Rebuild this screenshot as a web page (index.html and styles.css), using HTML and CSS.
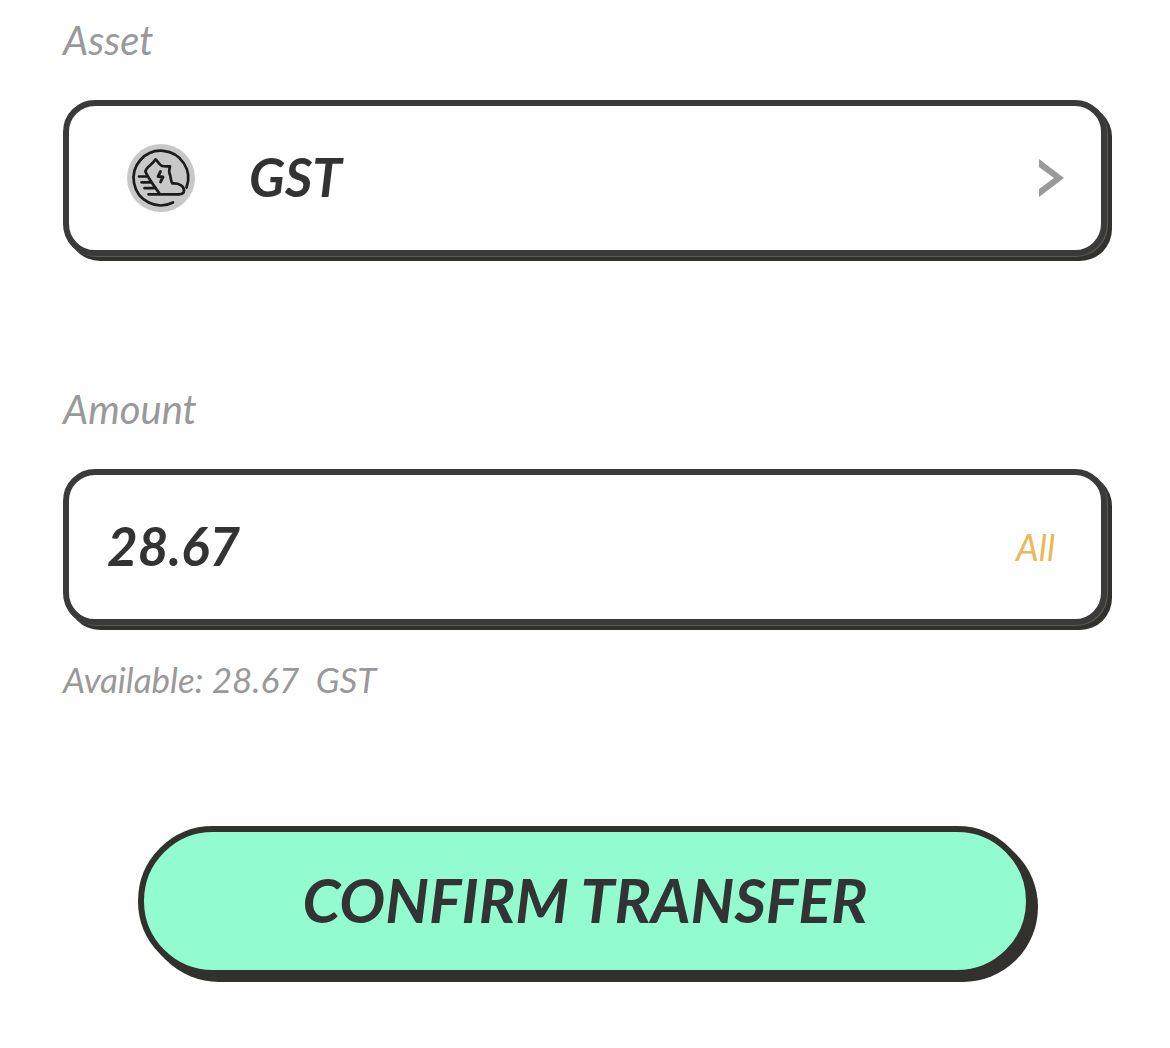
FILE: index.html
```html
<!DOCTYPE html>
<html lang="en">
<head>
    <meta charset="UTF-8">
    <meta name="viewport" content="width=device-width, initial-scale=1.0">
    <title>Transfer</title>
    <link rel="stylesheet" href="styles.css">
</head>
<body>
    <form class="transfer-form">
        <div class="field">
            <label class="field-label" for="asset">Asset</label>
            <button class="field-box asset-btn" id="asset" type="button">
                <svg class="asset-icon" viewBox="0 0 68 68" aria-hidden="true">
                    <circle cx="34" cy="34" r="34" fill="#c8c8c8"/>
                    <g fill="none" stroke="#1c1c1c" stroke-width="2.7" stroke-linecap="round" stroke-linejoin="round">
                        <path d="M59.5 43.5A27.3 27.3 0 1 0 46 58.5"/>
                        <path d="M18.500 27.500C19 23 25 21 28.500 15.500C31 17 31.500 20.500 34.500 21.700C37 22.700 40 22.500 43 22.300C42.500 25 41.500 27 42.500 29.500C44.500 33 43 37 45.500 39.500C52 39 57 42 57 46.500C57 49 55 50.300 52 50.300H21.500"/>
                        <path d="M18.500 27.500C20 32 27 42 32.500 49.500M12 32.500H20.500M14.500 38.300H23.500M17.500 44.200H27.500"/>
                        <path d="M33.500 27.500L31 32.500L36 33L33.500 38" stroke-width="2.8"/>
                    </g>
                </svg>
                <span class="asset-name">GST</span>
                <svg class="arrow" viewBox="0 0 26 38" aria-hidden="true">
                    <path d="M1 0L26 19L1 38V30L16 19L1 8Z" fill="#999"/>
                </svg>
            </button>
        </div>

        <div class="field">
            <label class="field-label" for="amount">Amount</label>
            <div class="field-box amount-box">
                <input class="amount-input" id="amount" type="text" inputmode="decimal" value="28.67">
                <button class="all-btn" type="button">All</button>
            </div>
            <p class="available">Available: 28.67 &nbsp;GST</p>
        </div>

        <button class="confirm-btn" type="submit">CONFIRM TRANSFER</button>
    </form>
</body>
</html>
```
FILE: styles.css
```css
* {
    box-sizing: border-box;
}
body {
    margin: 0;
    background-color: #fefefe;
    font-family: Lato, "Liberation Sans", sans-serif;
    font-style: italic;
    color: #333333;
}
button, input {
    font-family: inherit;
    font-style: inherit;
    color: inherit;
    padding: 0;
    border: none;
    background: none;
}
button {
    cursor: pointer;
}
.transfer-form {
    display: flex;
    flex-direction: column;
    padding: 16px 63px 72px;
}
.field {
    margin-bottom: 129px;
}
.field-label {
    display: block;
    margin-bottom: 36px;
    font-size: 40px;
    line-height: 48px;
    color: #999999;
}
.field-box {
    display: flex;
    align-items: center;
    width: 100%;
    height: 156px;
    border: 6px solid #3b3a3a;
    border-radius: 32px;
    background-color: #fefefe;
    box-shadow: 1px 1px 0 #5c5a57, 5px 5px 0 #33312d;
}
.asset-btn {
    padding: 0 37px 0 58px;
}
.asset-icon {
    width: 68px;
    height: 68px;
}
.asset-name {
    margin-left: 54px;
    padding-bottom: 4px;
    font-size: 53px;
    font-weight: 700;
}
.arrow {
    width: 26px;
    height: 38px;
    margin-left: auto;
}
.amount-box {
    padding: 0 46px 0 38px;
}
.amount-input {
    flex: 1;
    min-width: 0;
    padding-bottom: 4px;
    font-size: 53px;
    font-weight: 700;
    outline: none;
}
.all-btn {
    font-size: 36px;
    color: #e8b95b;
}
.available {
    margin: 36px 0 0;
    font-size: 35px;
    line-height: 36px;
    color: #999999;
}
.confirm-btn {
    height: 150px;
    margin: 0 75px;
    padding-bottom: 4px;
    border: 6px solid #33312d;
    border-radius: 75px;
    background-color: #93fbd0;
    box-shadow: 6px 6px 0 #33312d;
    font-size: 61px;
    font-weight: 700;
}
```
